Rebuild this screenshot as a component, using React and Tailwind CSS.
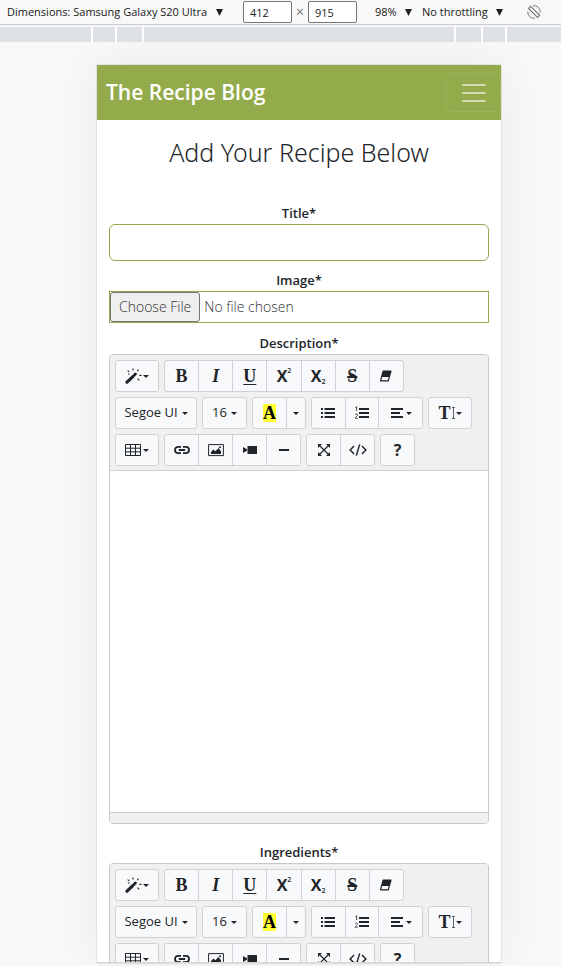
import React, { useId } from 'react';

function Caret() {
  return (
    <svg className="h-[3px] w-[6px] shrink-0" viewBox="0 0 6 3" fill="currentColor" aria-hidden="true">
      <path d="M0 0h6L3 3z" />
    </svg>
  );
}

function Glyph({ children, className = 'h-4 w-4' }) {
  return (
    <svg className={className} viewBox="0 0 16 16" fill="none" stroke="currentColor" strokeWidth="1.5" aria-hidden="true">
      {children}
    </svg>
  );
}

const icons = {
  magic: (
    <svg className="h-4 w-[18px] shrink-0" viewBox="0 0 18 16" fill="none" stroke="currentColor" aria-hidden="true">
      <path d="M2 14.2 7.6 8.8" strokeWidth="3.2" strokeLinecap="round" />
      <path d="M9.200 7.200l1.200-1.200" strokeWidth="3" strokeLinecap="round" />
      <path d="M2.6 2.6l1.6 1.2M8 .6v2M13.6 1.6l-1.4 1.6M14.4 7.4h2.2M12.6 10.6l1.6 1.8M4.6 6H3" strokeWidth="1.1" />
    </svg>
  ),
  eraser: (
    <Glyph>
      <path d="M5.200 3h7.800l-1.500 5.400H3.700z" fill="currentColor" strokeWidth="1.2" strokeLinejoin="round" />
      <path d="M3.700 8.400h7.800l-1.200 4.400H2.500z" strokeWidth="1.2" strokeLinejoin="round" />
    </Glyph>
  ),
  ul: (
    <Glyph>
      <path d="M4.500 4h10.500M4.500 8h10.500M4.500 12h10.500" strokeWidth="2" />
      <path d="M1 4h2M1 8h2M1 12h2" strokeWidth="2" />
    </Glyph>
  ),
  ol: (
    <Glyph>
      <path d="M5 4h10M5 8h10M5 12h10" strokeWidth="2" />
      <path d="M1.400 2.500l1.200-.8v4.300M1.200 9.800c.4-1.200 2.600-1 2.300.4-.2.900-2.300 2-2.300 3.100h2.600" strokeWidth=".8" />
    </Glyph>
  ),
  align: (
    <Glyph>
      <path d="M1 4h12M1 8h9M1 12h12" strokeWidth="2" />
    </Glyph>
  ),
  table: (
    <Glyph>
      <path d="M.5 2.500h15v11H.5zM.5 6.200h15M.5 9.800h15M5.500 2.500v11M10.500 2.500v11" strokeWidth="1" />
    </Glyph>
  ),
  link: (
    <Glyph>
      <path d="M7 4.800H4.200a3.200 3.200 0 0 0 0 6.400H7M9 4.800h2.800a3.200 3.200 0 0 1 0 6.400H9M4.800 8h6.400" strokeWidth="1.800" />
    </Glyph>
  ),
  picture: (
    <Glyph>
      <path d="M.6 2.600h14.800v11H.6z" strokeWidth="1" />
      <path d="M3 12V10l2.400-2.600 2 1.800L10.500 6 13 9.200V12z" fill="currentColor" stroke="none" />
      <circle cx="12" cy="5.200" r="1" fill="currentColor" stroke="none" />
    </Glyph>
  ),
  video: (
    <Glyph>
      <path d="M5.500 4h9.500v8H5.500z" fill="currentColor" stroke="none" />
      <path d="M1 5l4 2.200v1.600L1 11z" fill="currentColor" stroke="none" />
    </Glyph>
  ),
  minus: (
    <Glyph>
      <path d="M3 8h10" strokeWidth="2" />
    </Glyph>
  ),
  expand: (
    <Glyph>
      <path d="M3 3l10 10M13 3L3 13" strokeWidth="1.200" />
      <path d="M2 6V2h4zM10 2h4v4zM14 10v4h-4zM6 14H2v-4z" fill="currentColor" stroke="none" />
    </Glyph>
  ),
  code: (
    <Glyph className="h-[18px] w-[18px]">
      <path d="M4.500 4.500L1 8l3.500 3.500M11.500 4.500L15 8l-3.500 3.500M9.500 3L6.500 13" strokeWidth="1.300" />
    </Glyph>
  ),
};

function Group({ className, children }) {
  return (
    <div className={`flex h-8 divide-x divide-[#ced2d6] overflow-hidden rounded-[3px] border border-[#ced2d6] bg-[#f8f9fa] ${className}`}>
      {children}
    </div>
  );
}

function Tool({ label, className = 'flex-1', children }) {
  return (
    <button type="button" aria-label={label} className={`flex items-center justify-center ${className}`}>
      {children}
    </button>
  );
}

const serif = 'font-["Liberation_Serif",serif] text-lg leading-none';
const labelText = 'block text-center text-[13px] leading-[22px] font-semibold';

function Editor({ label }) {
  const id = useId();
  return (
    <section aria-labelledby={id}>
      <h2 id={id} className={labelText}>
        {label}
      </h2>
      <div className="overflow-hidden rounded-[4px] border border-[#c9c9c9]">
        <div className="flex flex-col gap-[5px] border-b border-[#cfcfcf] bg-[#f0f0f0] px-[5px] pt-[5px] pb-1">
          <div className="flex gap-[5px]">
            <Group className="w-11">
              <Tool label="Style">
                {icons.magic}
                <Caret />
              </Tool>
            </Group>
            <Group className="w-[240px]">
              <Tool label="Bold"><b className={serif}>B</b></Tool>
              <Tool label="Italic"><i className={`${serif} font-bold`}>I</i></Tool>
              <Tool label="Underline"><span className={`${serif} font-bold underline decoration-1 underline-offset-2`}>U</span></Tool>
              <Tool label="Superscript">
                <span className="text-base leading-none font-bold">X</span>
                <span className="self-start pt-[5px] text-[7px] font-semibold">2</span>
              </Tool>
              <Tool label="Subscript">
                <span className="text-base leading-none font-bold">X</span>
                <span className="self-end pb-1 text-[7px] font-semibold">2</span>
              </Tool>
              <Tool label="Strikethrough"><s className={`${serif} font-bold decoration-2`}>S</s></Tool>
              <Tool label="Remove formatting">{icons.eraser}</Tool>
            </Group>
          </div>
          <div className="flex gap-[5px]">
            <Group className="w-[82px]">
              <Tool label="Font family">
                <span className="mr-1 text-[13px]">Segoe UI</span>
                <Caret />
              </Tool>
            </Group>
            <Group className="w-[45px]">
              <Tool label="Font size">
                <span className="mr-1 text-[13px]">16</span>
                <Caret />
              </Tool>
            </Group>
            <Group className="w-[54px]">
              <Tool label="Text colour">
                <b className={`${serif} bg-[#ffff33] text-black`}>A</b>
              </Tool>
              <Tool label="More colours" className="w-[18px]"><Caret /></Tool>
            </Group>
            <Group className="w-28">
              <Tool label="Bulleted list">{icons.ul}</Tool>
              <Tool label="Numbered list">{icons.ol}</Tool>
              <Tool label="Paragraph" className="w-[43px]">
                {icons.align}
                <Caret />
              </Tool>
            </Group>
            <Group className="w-11">
              <Tool label="Line height">
                <b className={serif}>T</b>
                <svg className="h-3 w-[5px]" viewBox="0 0 5 12" fill="none" stroke="currentColor" strokeWidth=".7" aria-hidden="true">
                  <path d="M1 .500h3M1 11.500h3M2.500.500v11" />
                </svg>
                <Caret />
              </Tool>
            </Group>
          </div>
          <div className="flex gap-[5px]">
            <Group className="w-11">
              <Tool label="Table">
                {icons.table}
                <span className="ml-[2px] flex"><Caret /></span>
              </Tool>
            </Group>
            <Group className="w-[137px]">
              <Tool label="Link">{icons.link}</Tool>
              <Tool label="Picture">{icons.picture}</Tool>
              <Tool label="Video">{icons.video}</Tool>
              <Tool label="Horizontal rule">{icons.minus}</Tool>
            </Group>
            <Group className="w-[69px]">
              <Tool label="Full screen">{icons.expand}</Tool>
              <Tool label="Code view">{icons.code}</Tool>
            </Group>
            <Group className="w-[35px]">
              <Tool label="Help"><span className="text-base leading-none font-bold">?</span></Tool>
            </Group>
          </div>
        </div>
        <div contentEditable role="textbox" aria-labelledby={id} className="h-[341px] bg-white outline-none" />
        <div className="h-[11px] border-t border-[#cfcfcf] bg-[#f0f0f0]" />
      </div>
    </section>
  );
}

function BarSelect({ label, value }) {
  return (
    <label className="flex items-center gap-2">
      <select aria-label={label} className="appearance-none bg-transparent">
        <option>{value}</option>
      </select>
      <svg className="h-[7px] w-[7px]" viewBox="0 0 7 7" fill="currentColor" aria-hidden="true">
        <path d="M0 0h7L3.500 7z" />
      </svg>
    </label>
  );
}

function DeviceBar() {
  const box = 'h-[22px] w-[49px] rounded-[2px] border border-[#767676] bg-white px-[6px]';
  return (
    <header className="flex h-[25px] shrink-0 items-center border-b border-[#cacdd1] bg-[#f8f8f8] pl-[7px] text-[11px] text-[#202020]">
      <BarSelect label="Device" value="Dimensions: Samsung Galaxy S20 Ultra" />
      <input aria-label="Width" defaultValue="412" className={`ml-5 ${box}`} />
      <span className="w-4 text-center text-sm text-[#777]">×</span>
      <input aria-label="Height" defaultValue="915" className={box} />
      <div className="ml-[18px] flex gap-[10px]">
        <BarSelect label="Zoom" value="98%" />
        <BarSelect label="Throttling" value="No throttling" />
      </div>
      <button type="button" aria-label="Rotate" className="ml-6 text-[#777]">
        <svg className="h-[14px] w-[14px]" viewBox="0 0 14 14" fill="none" stroke="currentColor" aria-hidden="true">
          <path d="M3.600 1.300L1.500 3.400l9 9 2.100-2.100z" strokeWidth="1.200" />
          <path d="M6 .7a6.300 6.300 0 0 1 7.200 7M8 13.300a6.300 6.300 0 0 1-7.200-7" />
        </svg>
      </button>
    </header>
  );
}

function Ruler() {
  const mark = 'bg-[#dee1e6]';
  return (
    <div className="mt-[2px] flex h-[15px] shrink-0 gap-[2px] bg-white">
      <div className={`w-[91px] ${mark}`} />
      <div className={`w-[22px] ${mark}`} />
      <div className={`w-[25px] ${mark}`} />
      <div className={`flex-1 ${mark}`} />
      <div className={`w-[25px] ${mark}`} />
      <div className={`w-[22px] ${mark}`} />
      <div className={`w-[54px] ${mark}`} />
    </div>
  );
}

export default function App() {
  return (
    <div className='flex h-screen flex-col overflow-hidden bg-[#f8f8f8] font-["Open_Sans",sans-serif] text-[#212529]'>
      <DeviceBar />
      <Ruler />
      <div className="flex min-h-0 flex-1 pt-[23px] pr-[60px] pb-[3px] pl-[97px]">
        <div className="min-w-0 flex-1 overflow-hidden border-b border-[#d5d5d5] bg-white shadow-[0_0_40px_rgba(0,0,0,0.06),0_0_1px_rgba(0,0,0,0.4)]">
          <nav className="flex h-[55px] items-center justify-between bg-[#93ab4b] pl-[9px]">
            <a href="#" className="text-[21px] font-semibold text-white">The Recipe Blog</a>
            <button type="button" aria-label="Menu" className="flex h-[39px] w-[55px] items-center justify-center rounded-md border border-[#9cb35a] text-[#d1dcb3]">
              <svg className="h-[18px] w-6" viewBox="0 0 24 18" stroke="currentColor" strokeWidth="2" strokeLinecap="round" aria-hidden="true">
                <path d="M1 1h22M1 9h22M1 17h22" />
              </svg>
            </button>
          </nav>
          <main className="px-3">
            <h1 className='pt-4 pb-[34px] text-center font-["Noto_Sans",sans-serif] text-[25px] leading-8 font-light'>Add Your Recipe Below</h1>
            <form>
              <label htmlFor="title" className={labelText}>Title*</label>
              <input id="title" className="block h-[37px] w-full rounded-md border border-[#93a84f] bg-white px-3" />
              <label htmlFor="image" className={`mt-2 ${labelText}`}>Image*</label>
              <input
                id="image"
                type="file"
                className="block h-8 w-full border border-[#93a84f] text-sm leading-[28px] font-light text-[#333] file:mr-1 file:h-[30px] file:rounded-[3px] file:border file:border-solid file:border-[#767676] file:bg-[#efefef] file:px-2 file:text-[#333]"
              />
              <div className="mt-[9px] flex flex-col gap-[17px]">
                <Editor label="Description*" />
                <Editor label="Ingredients*" />
              </div>
            </form>
          </main>
        </div>
      </div>
    </div>
  );
}
